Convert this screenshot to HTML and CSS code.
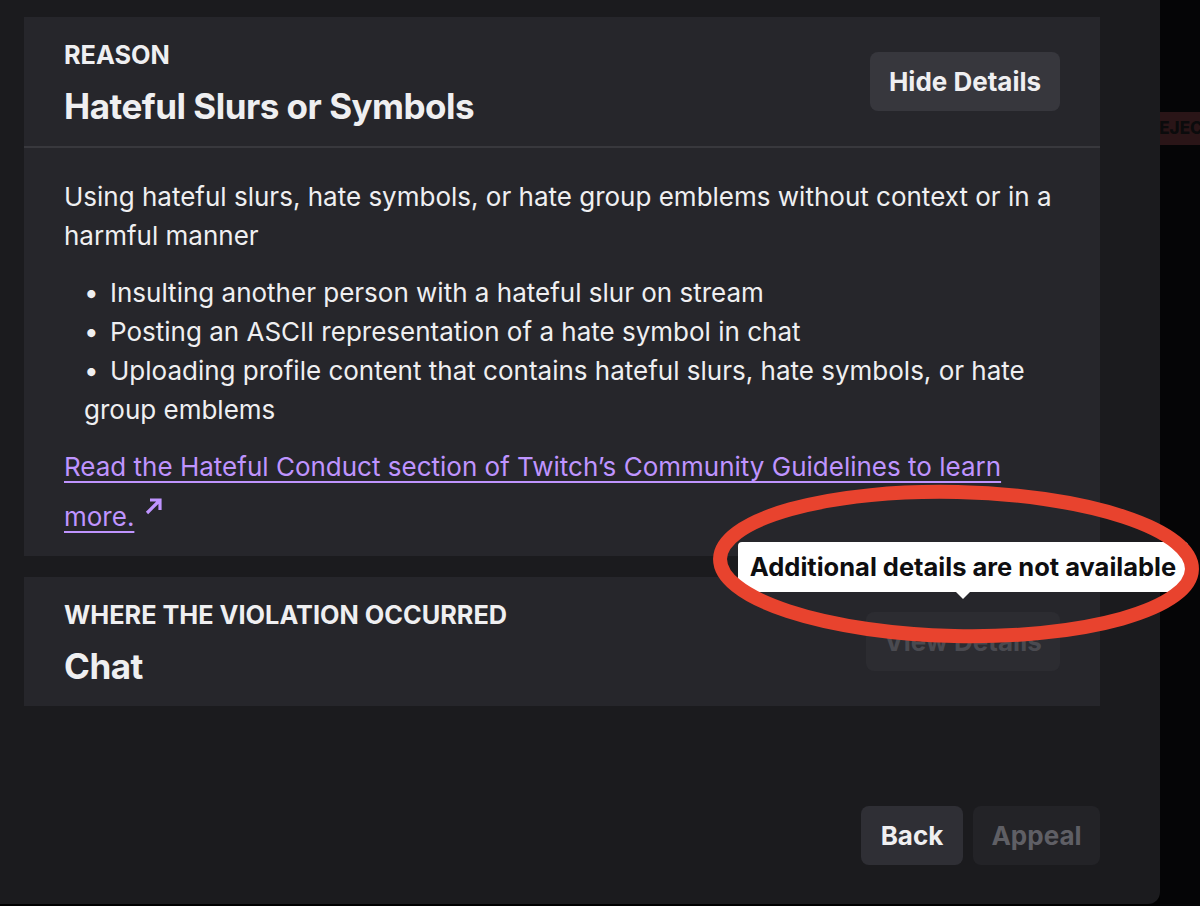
FILE: index.html
```html
<!DOCTYPE html>
<html lang="en">
<head>
<meta charset="utf-8">
<title>Violation details</title>
<link rel="stylesheet" href="styles.css">
</head>
<body>
<div class="page">
  <div class="modal">
    <section class="card">
      <div class="card-head">
        <div class="head-text">
          <div class="label">REASON</div>
          <div class="title">Hateful Slurs or Symbols</div>
        </div>
        <button class="btn btn-secondary">Hide Details</button>
      </div>
      <div class="card-body">
        <p class="desc">Using hateful slurs, hate symbols, or hate group emblems without context or in a harmful manner</p>
        <ul class="examples">
          <li>Insulting another person with a hateful slur on stream</li>
          <li>Posting an ASCII representation of a hate symbol in chat</li>
          <li>Uploading profile content that contains hateful slurs, hate symbols, or hate group emblems</li>
        </ul>
        <p class="more"><a class="link" href="#">Read the Hateful Conduct section of Twitch’s Community Guidelines to learn more.</a><svg class="ext" viewBox="0 0 20 20" width="20" height="20"><path d="M3 17 L15 5 M6 4 H16 V14" fill="none" stroke="#bf94ff" stroke-width="3.2"/></svg></p>
      </div>
    </section>
    <section class="card card-second">
      <div class="card-head">
        <div class="head-text">
          <div class="label">WHERE THE VIOLATION OCCURRED</div>
          <div class="title">Chat</div>
        </div>
        <div class="tip-anchor">
          <button class="btn btn-disabled">View Details</button>
          <div class="tooltip">Additional details are not available</div>
        </div>
      </div>
    </section>
    <div class="footer">
      <button class="btn btn-back">Back</button>
      <button class="btn btn-appeal">Appeal</button>
    </div>
  </div>
  <div class="behind">
    <div class="badge">REJECTED</div>
  </div>
  <svg class="annotation" viewBox="0 0 1200 906" width="1200" height="906">
    <ellipse cx="956" cy="564" rx="236" ry="72" transform="rotate(1.3 956 564)" fill="none" stroke="#e8432e" stroke-width="14"/>
  </svg>
</div>
</body>
</html>
```
FILE: styles.css
```css
* { box-sizing: border-box; }
html, body { margin: 0; padding: 0; background: #000; }
body {
  width: 1200px;
  height: 906px;
  overflow: hidden;
  font-family: Inter, "Liberation Sans", sans-serif;
  color: #efeff1;
}
.page {
  position: relative;
  display: flex;
  width: 1200px;
  height: 906px;
}
.modal {
  width: 1160px;
  height: 904px;
  background: #1b1b1e;
  border-bottom-right-radius: 12px;
  padding: 17px 60px 0 24px;
  display: flex;
  flex-direction: column;
}
.card {
  background: #26262b;
}
.card-second { margin-top: 21px; }
.card-head {
  display: flex;
  justify-content: space-between;
  align-items: flex-start;
  padding: 23px 40px 17px 40px;
}
.card-head > .btn,
.card-head > .tip-anchor { margin-top: 12px; }
.label {
  font-size: 25.3px;
  line-height: 30px;
  font-weight: 700;
  letter-spacing: 0;
}
.title {
  margin-top: 13px;
  font-size: 35px;
  line-height: 46px;
  font-weight: 700;
  letter-spacing: -0.5px;
}
.btn {
  font-family: Inter, "Liberation Sans", sans-serif;
  font-size: 26px;
  font-weight: 700;
  height: 59px;
  padding: 0 18px;
  border: none;
  border-radius: 8px;
  color: #efeff1;
  display: block;
}
.btn-secondary { background: #37373d; width: 190px; }
.btn-disabled { background: #2c2c31; color: #4a4a50; width: 194px; }
.card-body {
  border-top: 2px solid #38383d;
  padding: 30px 40px 14px 40px;
  font-size: 26px;
  line-height: 38.7px;
}
.desc { margin: 0; }
.examples {
  list-style: none;
  margin: 19px 0 0 0;
  padding: 0 0 0 20px;
}
.examples li::before {
  content: "•";
  display: inline-block;
  width: 26px;
}
.more {
  margin: 13px 0 0 0;
  line-height: 50px;
}
.link {
  color: #bf94ff;
  text-decoration: underline;
  text-underline-offset: 5px;
  text-decoration-thickness: 2px;
}
.ext {
  margin-left: 10px;
  vertical-align: 10px;
}
.tip-anchor { position: relative; }
.tooltip {
  position: absolute;
  left: 50%;
  bottom: 79px;
  transform: translateX(-50%);
  width: 450px;
  height: 50px;
  background: #fff;
  color: #0e0e10;
  font-size: 25.5px;
  font-weight: 700;
  line-height: 50px;
  text-align: center;
  border-radius: 4px;
  white-space: nowrap;
}
.tooltip::after {
  content: "";
  position: absolute;
  left: 50%;
  top: 100%;
  margin-left: -7px;
  border-left: 7px solid transparent;
  border-right: 7px solid transparent;
  border-top: 7px solid #fff;
}
.footer {
  margin-top: auto;
  padding-bottom: 39px;
  display: flex;
  justify-content: flex-end;
  gap: 10px;
}
.btn-back { background: #2f2f35; width: 102px; }
.btn-appeal { background: #232327; color: #5f5f65; width: 127px; }
.behind {
  width: 40px;
  height: 906px;
  overflow: hidden;
  background: #050506;
  padding-top: 112px;
}
.badge {
  margin-left: -24px;
  width: 140px;
  height: 33px;
  background: #2a1517;
  color: #0b0b0c;
  font-size: 17px;
  font-weight: 800;
  line-height: 33px;
  padding-left: 12px;
  white-space: nowrap;
}
.annotation {
  position: absolute;
  left: 0;
  top: 0;
  pointer-events: none;
}
```
